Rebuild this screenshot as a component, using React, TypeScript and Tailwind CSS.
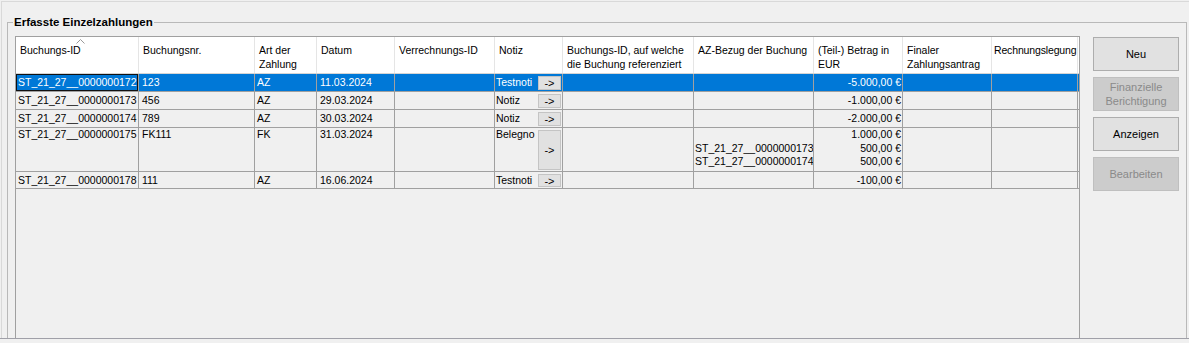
import React from "react";

const COLS =
  "grid grid-cols-[123px_116px_62px_78px_100px_68px_131px_120px_89px_89px_86px]";

type Row = {
  id: string;
  nr: string;
  art: string;
  datum: string;
  notiz: string;
  az: string[];
  betrag: string[];
  h: string;
  multi?: boolean;
  sel?: boolean;
};

const rows: Row[] = [
  { id: "ST_21_27__0000000172", nr: "123", art: "AZ", datum: "11.03.2024", notiz: "Testnoti", az: [], betrag: ["-5.000,00 €"], h: "h-[18px]", sel: true },
  { id: "ST_21_27__0000000173", nr: "456", art: "AZ", datum: "29.03.2024", notiz: "Notiz", az: [], betrag: ["-1.000,00 €"], h: "h-[18px]" },
  { id: "ST_21_27__0000000174", nr: "789", art: "AZ", datum: "30.03.2024", notiz: "Notiz", az: [], betrag: ["-2.000,00 €"], h: "h-[18px]" },
  {
    id: "ST_21_27__0000000175",
    nr: "FK111",
    art: "FK",
    datum: "31.03.2024",
    notiz: "Belegno",
    az: ["\u00a0", "ST_21_27__0000000173", "ST_21_27__0000000174"],
    betrag: ["1.000,00 €", "500,00 €", "500,00 €"],
    h: "h-[44px]",
    multi: true,
  },
  { id: "ST_21_27__0000000178", nr: "111", art: "AZ", datum: "16.06.2024", notiz: "Testnoti", az: [], betrag: ["-100,00 €"], h: "h-[17px]" },
];

const headers: string[][] = [
  ["Buchungs-ID"],
  ["Buchungsnr."],
  ["Art der", "Zahlung"],
  ["Datum"],
  ["Verrechnungs-ID"],
  ["Notiz"],
  ["Buchungs-ID, auf welche", "die Buchung referenziert"],
  ["AZ-Bezug der Buchung"],
  ["(Teil-) Betrag in", "EUR"],
  ["Finaler", "Zahlungsantrag"],
  ["Rechnungslegung"],
];

function Cell({ children, className = "" }: { children?: React.ReactNode; className?: string }) {
  return (
    <div className={"border-r border-[#a0a0a0] overflow-hidden whitespace-nowrap " + className}>
      {children}
    </div>
  );
}

function Btn({ label, disabled }: { label: React.ReactNode; disabled?: boolean }) {
  return (
    <div
      className={
        "h-[34px] flex items-center justify-center text-center leading-[14px] border text-[11px] " +
        (disabled
          ? "bg-[#cccccc] border-[#bfbfbf] text-[#8a8a8a]"
          : "bg-[#e1e1e1] border-[#adadad] text-black")
      }
    >
      {label}
    </div>
  );
}

export default function App() {
  return (
    <div className="w-[1189px] h-[343px] bg-[#f0f0f0] overflow-hidden flex flex-col font-['Liberation_Sans',Arial,sans-serif] text-[10.5px] text-black">
      <div className="h-[338px] flex pl-[1px] pt-[1px]">
        <div className="flex-1 flex border-l border-t border-[#d9d9d9] pl-[5px] pt-[20px]">
          <div className="relative flex-1 flex border-l border-t border-r border-[#b9b9b9] mr-[2px]">
            <span className="absolute left-[5px] top-[-8px] px-[1px] bg-[#f0f0f0] font-bold text-[11.5px] leading-[15px]">
              Erfasste Einzelzahlungen
            </span>
            {/* table */}
            <div className="ml-[7px] mt-[13px] flex-1 flex flex-col border-l border-r border-t border-[#a0a0a0] overflow-hidden">
              <div className={COLS + " relative h-[37px] bg-white border-b border-[#d5d5d5]"}>
                {headers.map((lines, i) => (
                  <div
                    key={i}
                    className={
                      "border-r border-[#e5e5e5] pt-[6px] leading-[14px] whitespace-nowrap overflow-hidden " +
                      (i === 10 ? "pl-[2px] tracking-[-0.15px]" : "pl-[4px]")
                    }
                  >
                    {lines.map((l, j) => (
                      <div key={j}>{l}</div>
                    ))}
                  </div>
                ))}
                <svg
                  className="absolute left-[60px] top-[2px]"
                  width="9"
                  height="5"
                  viewBox="0 0 9 5"
                >
                  <polyline points="0.5,4.5 4.5,0.5 8.5,4.5" fill="none" stroke="#9a9a9a" strokeWidth="1" />
                </svg>
              </div>
              {rows.map((r, i) => {
                const lh = r.multi ? "leading-[13.5px]" : "leading-[17px]";
                return (
                  <div
                    key={i}
                    className={
                      COLS +
                      " border-b border-[#a0a0a0] " +
                      r.h +
                      " " +
                      lh +
                      " " +
                      (r.sel ? "bg-[#0078d7] text-white" : "")
                    }
                  >
                    <Cell>
                      {r.sel ? (
                        <div className="h-full border border-[#111] pl-[1px] leading-[15px]">{r.id}</div>
                      ) : (
                        <div className="pl-[2px]">{r.id}</div>
                      )}
                    </Cell>
                    <Cell className="pl-[3px]">{r.nr}</Cell>
                    <Cell className="pl-[2px]">{r.art}</Cell>
                    <Cell className="pl-[3px]">{r.datum}</Cell>
                    <Cell />
                    <Cell className="flex">
                      <div className="flex-1 overflow-hidden pl-[1px]">{r.notiz}</div>
                      <div className="w-[23px] mt-[2px] mb-[1px] mr-[1px] flex items-center justify-center bg-[#e1e1e1] border border-[#c4c4c4] text-black leading-[12px] text-[11px]">
                        -&gt;
                      </div>
                    </Cell>
                    <Cell />
                    <Cell className="pl-[1px]">
                      {r.az.map((a, j) => (
                        <div key={j}>{a}</div>
                      ))}
                    </Cell>
                    <Cell className="text-right pr-[1px]">
                      {r.betrag.map((b, j) => (
                        <div key={j}>{b}</div>
                      ))}
                    </Cell>
                    <Cell />
                    <Cell />
                  </div>
                );
              })}
            </div>
            {/* buttons */}
            <div className="ml-[13px] mr-[7px] w-[86px] mt-[14px] flex flex-col gap-[6px]">
              <Btn label="Neu" />
              <Btn
                disabled
                label={
                  <span>
                    Finanzielle
                    <br />
                    Berichtigung
                  </span>
                }
              />
              <Btn label="Anzeigen" />
              <Btn disabled label="Bearbeiten" />
            </div>
          </div>
        </div>
      </div>
      <div className="h-px bg-[#a0a0a8]" />
      <div className="flex-1 bg-[#f0f0f0]" />
    </div>
  );
}
